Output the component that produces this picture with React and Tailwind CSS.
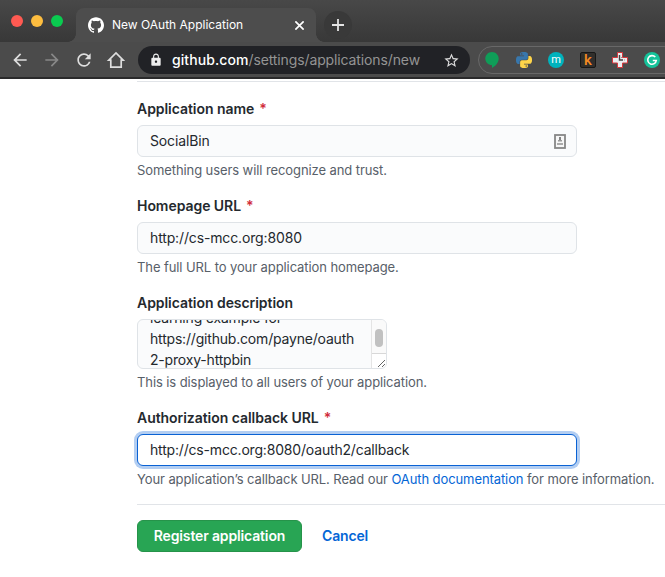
import React from "react";
import { SiGithub } from "react-icons/si";
import { MdArrowBack, MdArrowForward, MdRefresh, MdLock, MdStarBorder } from "react-icons/md";

const PY =
  "M14.25.18l.9.2.73.26.59.3.45.32.34.34.25.34.16.33.1.3.04.26.02.2-.01.13V8.5l-.05.63-.13.55-.21.46-.26.38-.3.31-.33.25-.35.19-.35.14-.33.1-.3.07-.26.04-.21.02H8.77l-.69.05-.59.14-.5.22-.41.27-.33.32-.27.35-.2.36-.15.37-.1.35-.07.32-.04.27-.02.21v3.06H3.17l-.21-.03-.28-.07-.32-.12-.35-.18-.36-.26-.36-.36-.35-.46-.32-.59-.28-.73-.21-.88-.14-1.05-.05-1.23.06-1.22.16-1.04.24-.87.32-.71.36-.57.4-.44.42-.33.42-.24.4-.16.36-.1.32-.05.24-.01h.16l.06.01h8.16v-.83H6.18l-.01-2.75-.02-.37.05-.34.11-.31.17-.28.25-.26.31-.23.38-.2.44-.18.51-.15.58-.12.64-.1.71-.06.77-.04.84-.02 1.27.05zm-6.3 1.98l-.23.33-.08.41.08.41.23.34.33.22.41.09.41-.09.33-.22.23-.34.08-.41-.08-.41-.23-.33-.33-.22-.41-.09-.41.09z";

function TabStrip() {
  return (
    <div className="flex h-[42px] bg-linear-to-b from-[#484848] to-[#383838]">
      <div className="flex w-[76px] shrink-0 gap-2 pt-[15px] pl-[11px]">
        <span className="size-3 rounded-full bg-[#ff5a52]" />
        <span className="size-3 rounded-full bg-[#fdbd3f]" />
        <span className="size-3 rounded-full bg-[#0acb50]" />
      </div>
      <div className="relative mt-2 flex h-[34px] w-[240px] shrink-0 items-center rounded-t-lg bg-[#4d4d4d] pl-3 text-white">
        <span className="absolute bottom-0 -left-2 size-2 bg-[radial-gradient(circle_at_0_0,transparent_7.5px,#4d4d4d_8px)]" />
        <span className="absolute -right-2 bottom-0 size-2 bg-[radial-gradient(circle_at_100%_0,transparent_7.5px,#4d4d4d_8px)]" />
        <SiGithub className="size-4" />
        <span className="ml-2 w-[180px] text-[12px] whitespace-nowrap">New OAuth Application</span>
        <svg viewBox="0 0 8 8" className="ml-[3px] size-[9px]" stroke="white" strokeWidth="1.5">
          <path d="M.3.3l7.4 7.4M7.7.3L.3 7.7" />
        </svg>
      </div>
      <div className="mt-[11px] ml-2 flex size-7 items-center justify-center rounded-full bg-[#393939]">
        <svg viewBox="0 0 12 12" className="size-3" stroke="#e4e4e4" strokeWidth="1.8">
          <path d="M6 0v12M0 6h12" />
        </svg>
      </div>
    </div>
  );
}

function Extensions() {
  return (
    <div className="ml-2 flex h-7 w-[200px] shrink-0 items-center gap-4 rounded-full border border-[#686868] pl-[5px]">
      <svg viewBox="0 0 16 16" className="size-4 shrink-0">
        <path d="M8 0C4.200 0 1.300 2.900 1.300 6.600S4.300 13.200 8 13.200V16c3.600-1.900 6.700-5.200 6.700-9.400C14.700 2.900 11.700 0 8 0z" fill="#0f9d58" />
      </svg>
      <svg viewBox="0 0 24 24" className="size-4 shrink-0">
        <path d={PY} fill="#3877ac" />
        <path d={PY} fill="#ffd54a" transform="rotate(180 12 12)" />
      </svg>
      <span className="flex size-4 shrink-0 items-center justify-center rounded-full bg-[#00b3bd] font-[Roboto,sans-serif] text-[11px] leading-none text-white">
        <span className="-mt-[2px]">m</span>
      </span>
      <span className="flex size-4 shrink-0 items-center justify-center rounded-[2px] border border-[#171717] bg-[#302e2b] font-[Roboto,sans-serif] text-[15px] leading-none font-medium text-[#f58a22]">
        k
      </span>
      <svg viewBox="0 0 16 16" className="size-4 shrink-0">
        <path d="M5.500.5h5v5h5v5.500h-5v4.500h-5V11h-5V5.500h5z" fill="#eceef0" stroke="#d6393e" />
        <path d="M7.500 3v5h3.500" fill="none" stroke="#444" strokeWidth="1.400" />
        <path d="M9.500 5v1M12 8h1" stroke="#999" />
      </svg>
      <svg viewBox="0 0 16 16" className="size-4 shrink-0">
        <circle cx="8" cy="8" r="8" fill="#15c39a" />
        <path d="M11.300 5.100A4.300 4.300 0 1 0 12.300 8.500H8.800" fill="none" stroke="white" strokeWidth="1.600" />
      </svg>
    </div>
  );
}

function Toolbar() {
  return (
    <div className="flex h-[37px] items-start border-b-2 border-[#2a2a2b] bg-[#4b4b4b] pt-1">
      <div className="flex h-7 w-[138px] shrink-0 items-center gap-3 pl-[10px] text-[#dedede]">
        <MdArrowBack className="size-5" />
        <MdArrowForward className="size-5 text-[#888]" />
        <MdRefresh className="size-5" />
        <svg viewBox="0 0 20 20" className="size-5" fill="none" stroke="currentColor" strokeWidth="1.700">
          <path d="M3.800 10.200H4.800V17.100H15.200V10.200H17.200L10 2.900L2.800 10.200Z" />
        </svg>
      </div>
      <div className="flex h-7 w-[332px] shrink-0 items-center rounded-full bg-[#212226] pl-[11px]">
        <MdLock className="size-[14px] text-[#eee]" />
        <span className="-mt-px ml-[9px] w-[271px] text-[14px] tracking-[-0.12px] whitespace-nowrap text-[#949494]">
          <span className="font-medium tracking-[0.08px] text-white">github.com</span>/settings/applications/new
        </span>
        <MdStarBorder className="size-[17px] text-[#ddd]" />
      </div>
      <Extensions />
    </div>
  );
}

function Label({ children, required, className }) {
  return (
    <div className={"h-5 text-[14px] leading-5 font-semibold tracking-[-0.05px] whitespace-nowrap " + className}>
      {children}
      {required && <span className="ml-[5px] text-[#d02c3a]">*</span>}
    </div>
  );
}

function Input({ children, icon }) {
  return (
    <div className="mt-[6px] flex h-8 w-[440px] items-center justify-between rounded-md border border-[#dfe3e7] bg-[#fafbfc] px-3 text-[14px] tracking-[-0.14px]">
      {children}
      {icon && (
        <svg viewBox="0 0 12 15" className="-mr-[2px] h-[15px] w-3">
          <rect x="1" y="1" width="10" height="13" fill="#f6f6f6" stroke="#878787" strokeWidth="1.800" />
          <path d="M6 3v4" stroke="#777" strokeWidth="1.800" />
          <path d="M4 6h4v1.500H4z" fill="#999" />
          <path d="M3 9h6v2H3z" fill="#aaa" />
        </svg>
      )}
    </div>
  );
}

function Note({ children, className }) {
  return <div className={"h-5 text-[13px] leading-5 tracking-[-0.09px] whitespace-nowrap text-[#586069] " + className}>{children}</div>;
}

export default function App() {
  return (
    <div className="h-[577px] w-[665px] overflow-hidden bg-white font-[Inter,sans-serif] text-[#24292e]">
      <TabStrip />
      <Toolbar />
      <main className="pt-[2px] pl-[137px]">
        <div className="h-px bg-[#e1e4e8]" />
        <Label required className="mt-[17px]">Application name</Label>
        <Input icon><span className="mb-[2px]">SocialBin</span></Input>
        <Note className="mt-[3px]">Something users will recognize and trust.</Note>

        <Label required className="mt-4">Homepage URL</Label>
        <Input><span className="mb-[2px]">http://cs-mcc.org:8080</span></Input>
        <Note className="mt-[3px]">The full URL to your application homepage.</Note>

        <Label className="mt-4">Application description</Label>
        <div className="mt-[6px] flex h-[50px] w-[250px] overflow-hidden rounded-md border border-[#dfe3e7] bg-[#fafbfc]">
          <div className="h-12 flex-1 overflow-hidden pl-3 text-[14px] leading-[21px] tracking-[-0.19px] whitespace-nowrap">
            <div className="-mt-[13px]">
              <div>learning example for</div>
              <div>https://github.com/payne/oauth</div>
              <div>2-proxy-httpbin</div>
            </div>
          </div>
          <div className="flex w-[15px] flex-col items-center border-l border-[#e4e4e4] bg-[#fafafa]">
            <div className="mt-[9px] h-[18px] w-2 rounded-full bg-[#c1c1c1]" />
            <div className="mt-[6px] h-[15px] w-full border-t border-[#d8d8d8] bg-white">
              <svg viewBox="0 0 14 14" className="size-[14px]" stroke="#555" strokeWidth=".9">
                <path d="M6 13l7-7M10 13l3-3" />
              </svg>
            </div>
          </div>
        </div>
        <Note className="mt-[3px]">This is displayed to all users of your application.</Note>

        <Label required className="mt-4">Authorization callback URL</Label>
        <div className="mt-[6px] flex h-8 w-[440px] items-center rounded-md border border-[#0a62d4] bg-white px-3 text-[14px] tracking-[-0.18px] shadow-[0_0_0_3px_#b3cef2]">
          <span className="mb-[2px]">http://cs-mcc.org:8080/oauth2/callback</span>
        </div>
        <Note className="mt-[3px]">
          <span>Your application’s callback URL. Read our </span>
          <a className="text-[#0366d6]">OAuth documentation</a>
          <span> for more information.</span>
        </Note>
        <div className="mt-[15px] h-px bg-[#e1e4e8]" />
        <div className="mt-[15px] flex items-center gap-5 text-[14px] font-semibold tracking-[-0.15px] whitespace-nowrap">
          <button className="h-8 w-[165px] rounded-md border border-[#26934a] bg-[#28a554] pb-[2px] text-white">Register application</button>
          <a className="mb-[2px] text-[#0366d6]">Cancel</a>
        </div>
      </main>
    </div>
  );
}
